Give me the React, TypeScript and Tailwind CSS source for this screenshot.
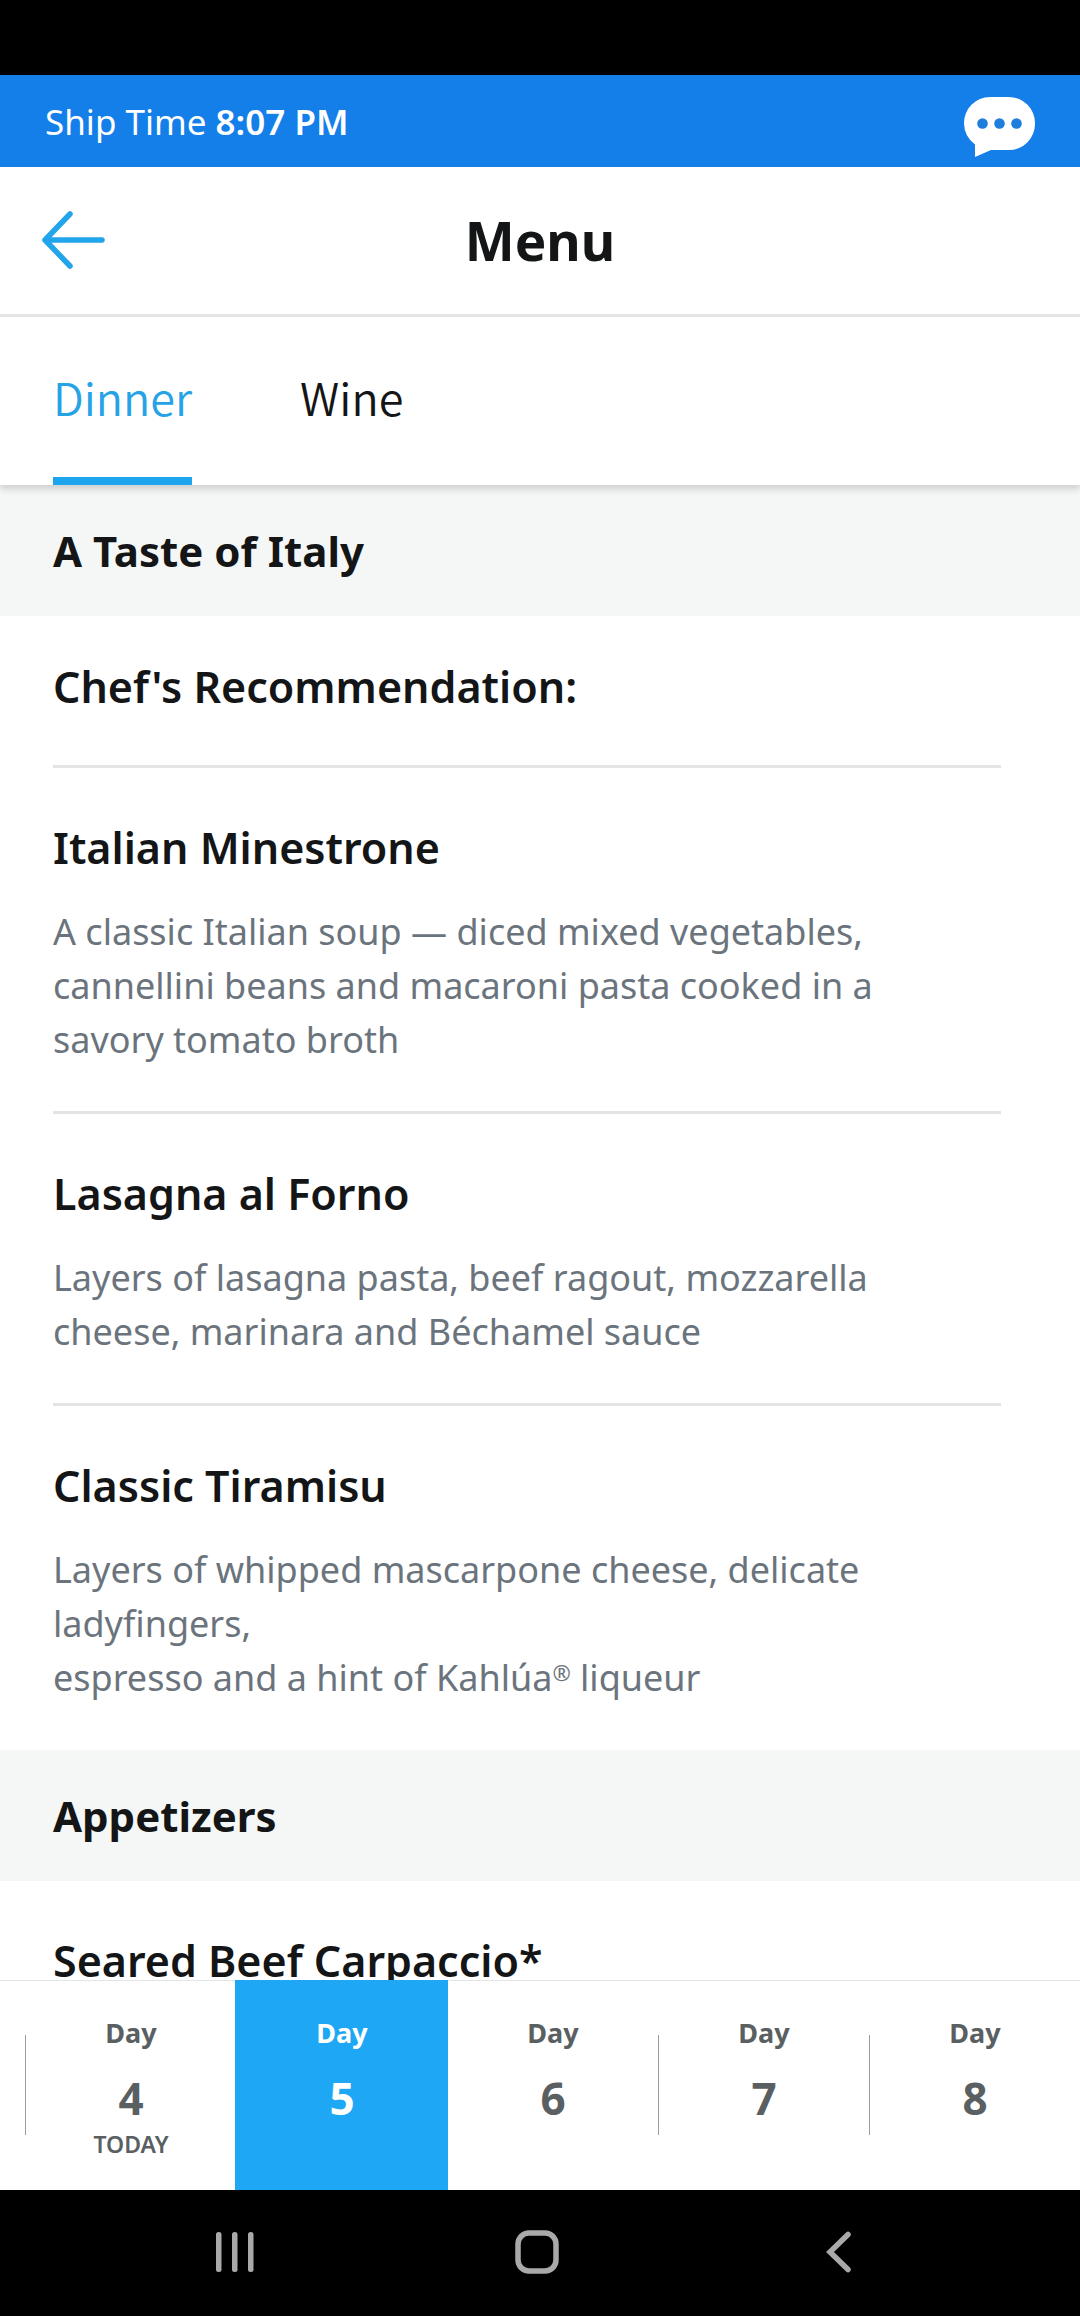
import React, { useState } from "react";

type Dish = { name: string; description?: React.ReactNode[] };
type Section = { title: string; dishes: Dish[] };

const sections: Section[] = [
  {
    title: "A Taste of Italy",
    dishes: [
      { name: "Chef's Recommendation:" },
      {
        name: "Italian Minestrone",
        description: [
          "A classic Italian soup — diced mixed vegetables, cannellini beans and macaroni pasta cooked in a savory tomato broth",
        ],
      },
      {
        name: "Lasagna al Forno",
        description: [
          "Layers of lasagna pasta, beef ragout, mozzarella cheese, marinara and Béchamel sauce",
        ],
      },
      {
        name: "Classic Tiramisu",
        description: [
          "Layers of whipped mascarpone cheese, delicate ladyfingers,",
          <>
            espresso and a hint of Kahlúa
            <span className="align-[10px] text-[22px] leading-none">®</span> liqueur
          </>,
        ],
      },
    ],
  },
  { title: "Appetizers", dishes: [{ name: "Seared Beef Carpaccio*" }] },
];

const tabs = ["Dinner", "Wine"];
const days = [4, 5, 6, 7, 8];
const today = 4;

function ShipTimeBar() {
  return (
    <div className="flex h-[92px] shrink-0 items-center justify-between bg-[#147ee9] px-[45px] text-white">
      <p className="pt-[2px] text-[35px] leading-[48px]">
        Ship Time <span className="font-semibold">8:07 PM</span>
      </p>
      <button type="button" aria-label="Chat" className="pt-3">
        <svg width="71" height="60" viewBox="0 0 71 60">
          <path
            fill="#fff"
            d="M26 0H45A26 26 0 0 1 71 26.500A26 26 0 0 1 45 53H27L11 60V47.500A27 27 0 0 1 0 26.500A26 26 0 0 1 26 0Z"
          />
          <g fill="#1f7ddb">
            <circle cx="18.500" cy="26.500" r="5.300" />
            <circle cx="35.500" cy="26.500" r="5.300" />
            <circle cx="52.500" cy="26.500" r="5.300" />
          </g>
        </svg>
      </button>
    </div>
  );
}

function TitleBar() {
  return (
    <header className="grid h-[150px] shrink-0 grid-cols-[1fr_auto_1fr] items-center border-b-[3px] border-[#e6e7e7] px-10">
      <button type="button" aria-label="Back" className="justify-self-start pb-[2px]">
        <svg
          width="68"
          height="60"
          viewBox="0 0 68 60"
          fill="none"
          stroke="#22a5ea"
          strokeWidth="5.500"
          strokeLinecap="round"
          strokeLinejoin="round"
        >
          <path d="M30 4 5 30 30 56M5 30H62" />
        </svg>
      </button>
      <h1 className="text-[53px] leading-[72px] font-bold">Menu</h1>
    </header>
  );
}

function Tabs() {
  const [active, setActive] = useState("Dinner");
  return (
    <nav
      role="tablist"
      className="relative z-10 flex h-[168px] shrink-0 gap-[108px] bg-white px-[53px] font-['Noto_Sans_CJK_SC',sans-serif] text-[45px] leading-[64px] font-[350] shadow-[0_4px_7px_rgba(20,30,30,0.18)]"
    >
      {tabs.map((tab) => (
        <button
          key={tab}
          type="button"
          role="tab"
          aria-selected={tab === active}
          onClick={() => setActive(tab)}
          className={
            tab === active
              ? "border-b-8 border-[#1ea5f0] text-[#26a3e6]"
              : "border-b-8 border-transparent"
          }
        >
          {tab}
        </button>
      ))}
    </nav>
  );
}

function DishRow({ dish }: { dish: Dish }) {
  return (
    <li
      className={
        dish.description
          ? "mr-[79px] ml-[53px] border-b-[3px] border-[#e3e4e5] pt-[50px] pb-11 last:border-b-0 last:pb-[45px]"
          : "mr-[79px] ml-[53px] border-b-[3px] border-[#e3e4e5] pt-[41px] pb-12 only:pt-[50px]"
      }
    >
      <h3 className="text-[43px] leading-[60px] font-semibold">{dish.name}</h3>
      {dish.description && (
        <div className="mt-[27px] pr-[53px] text-[36px] leading-[54px] text-[#6b747d]">
          {dish.description.map((line, i) => (
            <p key={i}>{line}</p>
          ))}
        </div>
      )}
    </li>
  );
}

function DayPicker() {
  const [selected, setSelected] = useState(5);
  return (
    <div className="flex h-[210px] shrink-0 border-t border-[#e3e6e6] bg-white pl-[25px]">
      {days.map((day) => {
        const on = day === selected;
        const plain = on || day === selected + 1;
        return (
          <button
            key={day}
            type="button"
            aria-pressed={on}
            onClick={() => setSelected(day)}
            className={
              on
                ? "flex flex-1 items-start bg-[#1ea7f4] text-white outline outline-[#1ea7f4]"
                : "flex flex-1 items-start text-[#5a6062]"
            }
          >
            <span
              className={
                plain
                  ? "mt-[54px] h-[100px] w-px"
                  : "mt-[54px] h-[100px] w-px bg-[#9a9d9e]"
              }
            />
            <span className="flex flex-1 flex-col items-center pt-8 font-bold">
              <span className="text-[27px] leading-[40px]">Day</span>
              <span className="mt-[14px] text-[44px] leading-[62px]">{day}</span>
              {day === today && (
                <span className="text-[23px] leading-[30px] font-semibold">TODAY</span>
              )}
            </span>
          </button>
        );
      })}
    </div>
  );
}

function SystemNav() {
  return (
    <div className="relative flex h-[126px] shrink-0 items-center justify-center gap-[246px] bg-black pr-[7px] pb-[2px]">
      <button type="button" aria-label="Recent apps" className="w-[56px]">
        <svg width="56" height="46" viewBox="0 0 56 46" fill="#a9a9a9">
          <rect x="9" y="3" width="5.500" height="40" rx="2.500" />
          <rect x="25" y="3" width="5.500" height="40" rx="2.500" />
          <rect x="41" y="3" width="5.500" height="40" rx="2.500" />
        </svg>
      </button>
      <button type="button" aria-label="Home" className="w-[56px]">
        <svg width="56" height="46" viewBox="0 0 56 46" fill="none" stroke="#a9a9a9" strokeWidth="5.500">
          <rect x="9" y="4" width="38" height="38" rx="11" />
        </svg>
      </button>
      <button type="button" aria-label="Back" className="w-[56px]">
        <svg
          width="56"
          height="46"
          viewBox="0 0 56 46"
          fill="none"
          stroke="#a9a9a9"
          strokeWidth="5.500"
          strokeLinecap="round"
        >
          <path d="M37 5.500 19 23 37 40.500" />
        </svg>
      </button>
    </div>
  );
}

export default function App() {
  return (
    <div className="flex h-screen flex-col bg-white font-['Noto_Sans',sans-serif] text-[#141516]">
      <div className="h-[75px] shrink-0 bg-black" />
      <ShipTimeBar />
      <TitleBar />
      <Tabs />
      <main className="min-h-0 flex-1 overflow-y-auto [scrollbar-width:none]">
        {sections.map((section) => (
          <section key={section.title}>
            <h2 className="bg-[#f5f7f6] px-[53px] py-[35px] text-[42px] leading-[61px] font-bold">
              {section.title}
            </h2>
            <ul>
              {section.dishes.map((dish) => (
                <DishRow key={dish.name} dish={dish} />
              ))}
            </ul>
          </section>
        ))}
      </main>
      <DayPicker />
      <SystemNav />
    </div>
  );
}
